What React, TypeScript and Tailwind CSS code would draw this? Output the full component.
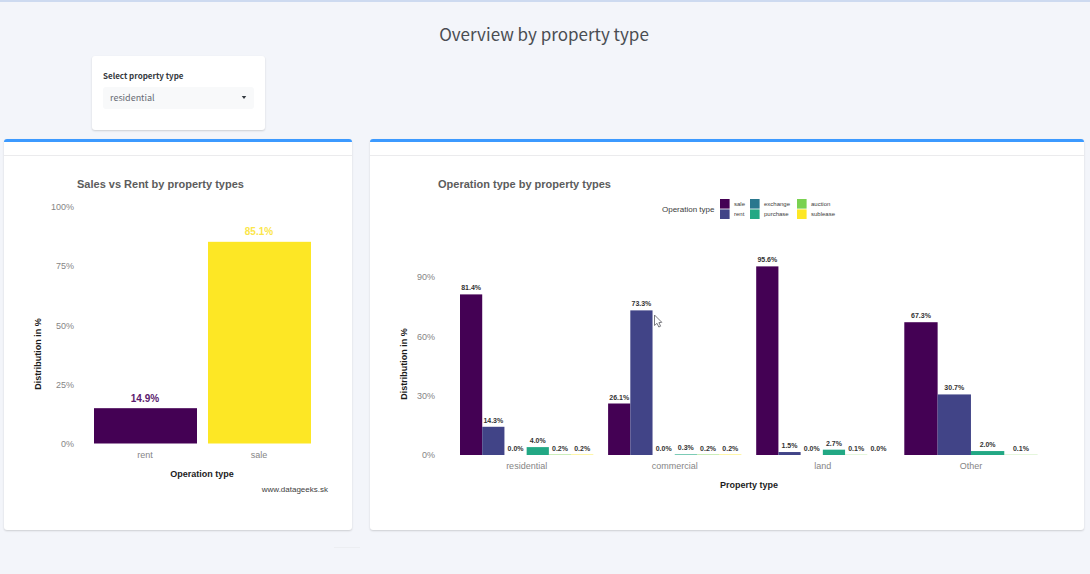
import { useState, type ReactNode } from "react";

const COLORS = {
  sale: "#440154",
  rent: "#414487",
  exchange: "#2a788e",
  purchase: "#22a884",
  auction: "#7ad151",
  sublease: "#fde725",
} as const;

type Operation = keyof typeof COLORS;
type Entry = { op: Operation; value: number };

const groups: { name: string; entries: Entry[] }[] = [
  {
    name: "residential",
    entries: [
      { op: "sale", value: 81.4 },
      { op: "rent", value: 14.3 },
      { op: "exchange", value: 0.0 },
      { op: "purchase", value: 4.0 },
      { op: "auction", value: 0.2 },
      { op: "sublease", value: 0.2 },
    ],
  },
  {
    name: "commercial",
    entries: [
      { op: "sale", value: 26.1 },
      { op: "rent", value: 73.3 },
      { op: "exchange", value: 0.0 },
      { op: "purchase", value: 0.3 },
      { op: "auction", value: 0.2 },
      { op: "sublease", value: 0.2 },
    ],
  },
  {
    name: "land",
    entries: [
      { op: "sale", value: 95.6 },
      { op: "rent", value: 1.5 },
      { op: "exchange", value: 0.0 },
      { op: "purchase", value: 2.7 },
      { op: "auction", value: 0.1 },
      { op: "sublease", value: 0.0 },
    ],
  },
  {
    name: "Other",
    entries: [
      { op: "sale", value: 67.3 },
      { op: "rent", value: 30.7 },
      { op: "purchase", value: 2.0 },
      { op: "auction", value: 0.1 },
    ],
  },
];

const legend: Operation[][] = [
  ["sale", "rent"],
  ["exchange", "purchase"],
  ["auction", "sublease"],
];

const CHART = "block w-full font-['Liberation_Sans',Arial,sans-serif]";
const AXIS = "fill-[#858585] text-[9px]";
const AXIS_TITLE = "fill-[#1c1c1c] text-[9px] font-bold";
const CHART_TITLE = "fill-[#5c5c5c] text-[11px] font-bold";

function Card({ className, children }: { className: string; children: ReactNode }) {
  return (
    <section
      className={`overflow-hidden rounded-[3px] border-t-[3px] border-[#3c9aff] bg-white shadow-[0_1px_2px_rgba(0,0,0,0.16)] ${className}`}
    >
      <div className="h-[14px] border-b border-[#ebebed]" />
      {children}
    </section>
  );
}

function SalesChart() {
  const base = 287;
  const bars = [
    { name: "rent", value: 14.9, x: 90, fill: "#440154", label: "#5b1a6e" },
    { name: "sale", value: 85.1, x: 204, fill: "#fde725", label: "#fbe64a" },
  ];
  return (
    <svg viewBox="0 0 348 374" className={CHART} role="img" aria-label="Sales vs Rent by property types">
      <text x="73" y="32" className={CHART_TITLE}>
        Sales vs Rent by property types
      </text>
      {[0, 25, 50, 75, 100].map((tick) => (
        <text key={tick} x="70" y={base + 4 - tick * 2.37} textAnchor="end" className={AXIS}>
          {tick}%
        </text>
      ))}
      <text transform="translate(37 198) rotate(-90)" textAnchor="middle" className={AXIS_TITLE}>
        Distribution in %
      </text>
      {bars.map((bar) => {
        const height = bar.value * 2.37;
        return (
          <g key={bar.name} textAnchor="middle">
            <rect x={bar.x} y={base - height + 0.5} width="103" height={height} fill={bar.fill} />
            <text x={bar.x + 51} y={base - height - 6} fill={bar.label} className="text-[10px] font-bold">
              {bar.value.toFixed(1)}%
            </text>
            <text x={bar.x + 51} y="302" className={AXIS}>
              {bar.name}
            </text>
          </g>
        );
      })}
      <text x="198" y="321" textAnchor="middle" className={AXIS_TITLE}>
        Operation type
      </text>
      <text x="324" y="336" textAnchor="end" className="fill-[#404040] text-[8px]">
        www.datageeks.sk
      </text>
    </svg>
  );
}

function OperationChart() {
  const base = 299;
  const scale = 1.973;
  const groupWidth = 133.3;
  return (
    <svg viewBox="0 0 714 374" className={CHART} role="img" aria-label="Operation type by property types">
      <text x="68" y="32" className={CHART_TITLE}>
        Operation type by property types
      </text>

      <text x="292" y="56" className="fill-[#3c3c3c] text-[8px]">
        Operation type
      </text>
      {legend.map((column, c) =>
        column.map((op, r) => {
          const x = [350, 380, 427][c];
          return (
            <g key={op}>
              <rect x={x} y={43 + r * 10.4} width="9.6" height="9.6" fill={COLORS[op]} />
              <text x={x + 14} y={50 + r * 10.4} className="fill-[#3c3c3c] text-[6px]">
                {op}
              </text>
            </g>
          );
        }),
      )}

      {[0, 30, 60, 90].map((tick) => (
        <text key={tick} x="65" y={base + 3 - tick * scale} textAnchor="end" className={AXIS}>
          {tick}%
        </text>
      ))}
      <text transform="translate(37 208) rotate(-90)" textAnchor="middle" className={AXIS_TITLE}>
        Distribution in %
      </text>

      {groups.map((group, g) => {
        const start = 90 + g * 148.1;
        const width = groupWidth / group.entries.length;
        return (
          <g key={group.name} textAnchor="middle">
            {group.entries.map((entry, i) => {
              const height = entry.value * scale;
              const x = start + i * width;
              return (
                <g key={entry.op}>
                  <rect x={x} y={base - height} width={width} height={height} fill={COLORS[entry.op]} />
                  <text x={x + width / 2} y={base - height - 4} className="fill-[#333333] text-[7px] font-bold">
                    {entry.value.toFixed(1)}%
                  </text>
                </g>
              );
            })}
            <text x={start + groupWidth / 2} y="313" className={AXIS}>
              {group.name}
            </text>
          </g>
        );
      })}
      <text x="379" y="332" textAnchor="middle" className={AXIS_TITLE}>
        Property type
      </text>

      <path
        d="M284.5 159 V169.5 L287 167.3 L288.8 171 L290.6 170.2 L288.9 166.6 L291.8 166.3 Z"
        fill="#ffffff"
        stroke="#6b6b70"
        strokeWidth="0.9"
        strokeLinejoin="round"
      />
    </svg>
  );
}

export default function App() {
  const [type, setType] = useState("residential");
  return (
    <main className="min-h-screen border-t-2 border-[#cddaf0] bg-[#f3f5fa] pr-1.5 pl-1 font-['Noto_Sans_CJK_SC','Noto_Sans',sans-serif]">
      <h1 className="pt-[18px] text-center text-[17px] leading-7 text-[#4a4d52]">Overview by property type</h1>

      <div className="mt-2 ml-[88px] h-[74px] w-[173px] rounded-[3px] bg-white px-[11px] pt-3 shadow-[0_1px_2px_rgba(0,0,0,0.16)]">
        <label htmlFor="property-type" className="block text-[8px] leading-4 font-bold text-[#33373c]">
          Select property type
        </label>
        <div className="relative mt-[3px]">
          <select
            id="property-type"
            value={type}
            onChange={(e) => setType(e.target.value)}
            className="block h-[22px] w-full appearance-none rounded-[3px] bg-[#f8f9fa] px-[7px] text-[9px] text-[#666a73] outline-none"
          >
            {groups.map((group) => (
              <option key={group.name}>{group.name}</option>
            ))}
          </select>
          <svg viewBox="0 0 6 4" className="pointer-events-none absolute top-[9px] right-[7px] h-[3px] w-[6px]" aria-hidden="true">
            <path d="M0 0 H6 L3 4 Z" fill="#343a40" />
          </svg>
        </div>
      </div>

      <div className="mt-[9px] grid grid-cols-12 items-start gap-[18px]">
        <Card className="col-span-4">
          <SalesChart />
        </Card>
        <Card className="col-span-8">
          <OperationChart />
        </Card>
      </div>

      <div className="mt-[17px] ml-[330px] h-px w-[26px] bg-[#eceef2]" />
    </main>
  );
}
